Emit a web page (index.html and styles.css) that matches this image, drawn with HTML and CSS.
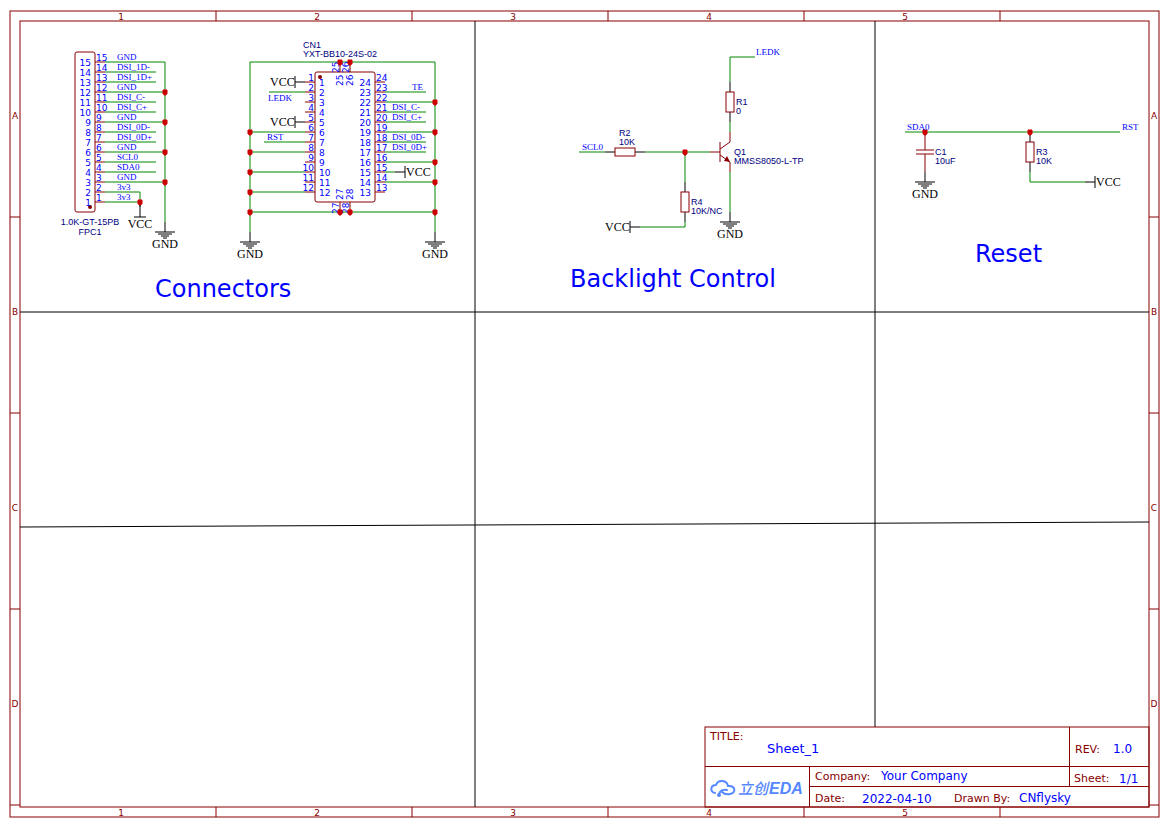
FILE: index.html
```html
<!DOCTYPE html>
<html lang="en">
<head>
<meta charset="utf-8">
<title>Sheet_1</title>
<link rel="stylesheet" href="styles.css">
</head>
<body>
<main class="page">
<svg class="sheet" viewBox="0 0 1169 828" role="img" aria-label="Schematic Sheet_1">
  <defs>
    <g id="gnd">
      <path class="lead" d="M0-10V0M-10 0H10M-7 2H7M-4 4H4M-2 6H2"/>
      <text class="power mid" x="0" y="16">GND</text>
    </g>
    <g id="res-v">
      <path class="lead" d="M0-20V-10M0 10V20"/>
      <rect class="part" x="-4" y="-10" width="8" height="20"/>
    </g>
    <g id="res-h">
      <path class="lead" d="M-20 0H-10M10 0H20"/>
      <rect class="part" x="-10" y="-4" width="20" height="8"/>
    </g>
    <path id="dot" class="junction" d="M-1-2H1V-2H2V2H1V3H-1V2H-2V-2H-1Z"/>
  </defs>

  <!-- Sheet frame -->
  <g class="frame">
    <rect x="10" y="11" width="1149" height="806"/>
    <rect x="20" y="21" width="1129" height="786"/>
    <path d="M216 11V21M412 11V21M608 11V21M804 11V21M1000 11V21"/>
    <path d="M216 807V817M412 807V817M608 807V817M804 807V817M1000 807V817"/>
    <path d="M10 217H20M10 413H20M10 609H20M10 805H20"/>
    <path d="M1149 217H1159M1149 413H1159M1149 609H1159M1149 805H1159"/>
  </g>
  <g class="zone mid">
    <text y="20"><tspan x="121">1</tspan><tspan x="317">2</tspan><tspan x="513">3</tspan><tspan x="709">4</tspan><tspan x="905">5</tspan></text>
    <text y="816"><tspan x="121">1</tspan><tspan x="317">2</tspan><tspan x="513">3</tspan><tspan x="709">4</tspan><tspan x="905">5</tspan></text>
    <text><tspan x="15" y="119">A</tspan><tspan x="15" y="315">B</tspan><tspan x="15" y="511">C</tspan><tspan x="15" y="707">D</tspan></text>
    <text><tspan x="1154" y="119">A</tspan><tspan x="1154" y="315">B</tspan><tspan x="1154" y="511">C</tspan><tspan x="1154" y="707">D</tspan></text>
  </g>

  <!-- Section dividers -->
  <path class="divider" d="M20 312H1149M475 21V807M875 21V727M20 527L1149 522"/>

  <!-- FPC1 -->
  <path class="wire" d="M105 62H165V222M105 72H156M105 82H156M105 92H165M105 102H156M105 112H156M105 122H165M105 132H156M105 142H156M105 152H165M105 162H156M105 172H156M105 182H165M105 192H140V207M105 202H140"/>
  <rect class="part" x="75" y="52" width="20" height="160" rx="2"/>
  <path class="part" d="M95 62h10M95 72h10M95 82h10M95 92h10M95 102h10M95 112h10M95 122h10M95 132h10M95 142h10M95 152h10M95 162h10M95 172h10M95 182h10M95 192h10M95 202h10"/>
  <circle class="mark" cx="90" cy="207" r="2"/>
  <text class="pin" y="51"><tspan x="96" dy="10">15</tspan><tspan x="96" dy="10">14</tspan><tspan x="96" dy="10">13</tspan><tspan x="96" dy="10">12</tspan><tspan x="96" dy="10">11</tspan><tspan x="96" dy="10">10</tspan><tspan x="96" dy="10">9</tspan><tspan x="96" dy="10">8</tspan><tspan x="96" dy="10">7</tspan><tspan x="96" dy="10">6</tspan><tspan x="96" dy="10">5</tspan><tspan x="96" dy="10">4</tspan><tspan x="96" dy="10">3</tspan><tspan x="96" dy="10">2</tspan><tspan x="96" dy="10">1</tspan></text>
  <text class="pin end" y="56"><tspan x="91" dy="10">15</tspan><tspan x="91" dy="10">14</tspan><tspan x="91" dy="10">13</tspan><tspan x="91" dy="10">12</tspan><tspan x="91" dy="10">11</tspan><tspan x="91" dy="10">10</tspan><tspan x="91" dy="10">9</tspan><tspan x="91" dy="10">8</tspan><tspan x="91" dy="10">7</tspan><tspan x="91" dy="10">6</tspan><tspan x="91" dy="10">5</tspan><tspan x="91" dy="10">4</tspan><tspan x="91" dy="10">3</tspan><tspan x="91" dy="10">2</tspan><tspan x="91" dy="10">1</tspan></text>
  <text class="net" y="50"><tspan x="117" dy="10">GND</tspan><tspan x="117" dy="10">DSI_1D-</tspan><tspan x="117" dy="10">DSI_1D+</tspan><tspan x="117" dy="10">GND</tspan><tspan x="117" dy="10">DSI_C-</tspan><tspan x="117" dy="10">DSI_C+</tspan><tspan x="117" dy="10">GND</tspan><tspan x="117" dy="10">DSI_0D-</tspan><tspan x="117" dy="10">DSI_0D+</tspan><tspan x="117" dy="10">GND</tspan><tspan x="117" dy="10">SCL0</tspan><tspan x="117" dy="10">SDA0</tspan><tspan x="117" dy="10">GND</tspan><tspan x="117" dy="10">3v3</tspan><tspan x="117" dy="10">3v3</tspan></text>
  <use href="#dot" x="165" y="92"/><use href="#dot" x="165" y="122"/><use href="#dot" x="165" y="152"/><use href="#dot" x="165" y="182"/><use href="#dot" x="140" y="202"/>
  <path class="lead" d="M140 205V217M134 217H146"/>
  <text class="power mid" x="140" y="228">VCC</text>
  <use href="#gnd" x="165" y="232"/>
  <text class="name mid" x="90" y="225">1.0K-GT-15PB</text>
  <text class="name mid" x="90" y="235">FPC1</text>

  <!-- CN1 -->
  <path class="wire" d="M250 232V62H435V232M250 212H435M269 92H305M250 132H305M264 142H305M250 152H305M250 172H305M250 192H305M385 92H426M385 102H435M385 112H426M385 122H426M385 132H435M385 142H426M385 152H426M385 162H435M385 172H395M385 182H435"/>
  <rect class="part" x="315" y="72" width="60" height="130" rx="2"/>
  <path class="part" d="M305 82h10M305 92h10M305 102h10M305 112h10M305 122h10M305 132h10M305 142h10M305 152h10M305 162h10M305 172h10M305 182h10M305 192h10"/>
  <path class="part" d="M375 82h10M375 92h10M375 102h10M375 112h10M375 122h10M375 132h10M375 142h10M375 152h10M375 162h10M375 172h10M375 182h10M375 192h10"/>
  <path class="part" d="M340 62v10M350 62v10M340 202v10M350 202v10"/>
  <circle class="mark" cx="320" cy="77" r="2"/>
  <text class="pin end" y="71"><tspan x="314" dy="10">1</tspan><tspan x="314" dy="10">2</tspan><tspan x="314" dy="10">3</tspan><tspan x="314" dy="10">4</tspan><tspan x="314" dy="10">5</tspan><tspan x="314" dy="10">6</tspan><tspan x="314" dy="10">7</tspan><tspan x="314" dy="10">8</tspan><tspan x="314" dy="10">9</tspan><tspan x="314" dy="10">10</tspan><tspan x="314" dy="10">11</tspan><tspan x="314" dy="10">12</tspan></text>
  <text class="pin" y="76"><tspan x="319" dy="10">1</tspan><tspan x="319" dy="10">2</tspan><tspan x="319" dy="10">3</tspan><tspan x="319" dy="10">4</tspan><tspan x="319" dy="10">5</tspan><tspan x="319" dy="10">6</tspan><tspan x="319" dy="10">7</tspan><tspan x="319" dy="10">8</tspan><tspan x="319" dy="10">9</tspan><tspan x="319" dy="10">10</tspan><tspan x="319" dy="10">11</tspan><tspan x="319" dy="10">12</tspan></text>
  <text class="pin" y="71"><tspan x="376" dy="10">24</tspan><tspan x="376" dy="10">23</tspan><tspan x="376" dy="10">22</tspan><tspan x="376" dy="10">21</tspan><tspan x="376" dy="10">20</tspan><tspan x="376" dy="10">19</tspan><tspan x="376" dy="10">18</tspan><tspan x="376" dy="10">17</tspan><tspan x="376" dy="10">16</tspan><tspan x="376" dy="10">15</tspan><tspan x="376" dy="10">14</tspan><tspan x="376" dy="10">13</tspan></text>
  <text class="pin end" y="76"><tspan x="371" dy="10">24</tspan><tspan x="371" dy="10">23</tspan><tspan x="371" dy="10">22</tspan><tspan x="371" dy="10">21</tspan><tspan x="371" dy="10">20</tspan><tspan x="371" dy="10">19</tspan><tspan x="371" dy="10">18</tspan><tspan x="371" dy="10">17</tspan><tspan x="371" dy="10">16</tspan><tspan x="371" dy="10">15</tspan><tspan x="371" dy="10">14</tspan><tspan x="371" dy="10">13</tspan></text>
  <g class="pin">
    <text transform="translate(339 73) rotate(-90)">25</text>
    <text transform="translate(349 73) rotate(-90)">26</text>
    <text transform="translate(343 86) rotate(-90)">25</text>
    <text transform="translate(353 86) rotate(-90)">26</text>
    <text transform="translate(343 200) rotate(-90)">27</text>
    <text transform="translate(353 200) rotate(-90)">28</text>
    <text transform="translate(339 214) rotate(-90)">27</text>
    <text transform="translate(349 214) rotate(-90)">28</text>
  </g>
  <g class="net">
    <text x="268" y="101">LEDK</text>
    <text x="267" y="140">RST</text>
    <text x="412" y="90">TE</text>
    <text x="392" y="110">DSI_C-</text>
    <text x="392" y="120">DSI_C+</text>
    <text x="392" y="140">DSI_0D-</text>
    <text x="392" y="150">DSI_0D+</text>
  </g>
  <use href="#dot" x="250" y="132"/><use href="#dot" x="250" y="152"/><use href="#dot" x="250" y="172"/><use href="#dot" x="250" y="192"/><use href="#dot" x="250" y="212"/>
  <use href="#dot" x="340" y="62"/><use href="#dot" x="350" y="62"/><use href="#dot" x="340" y="212"/><use href="#dot" x="350" y="212"/>
  <use href="#dot" x="435" y="102"/><use href="#dot" x="435" y="132"/><use href="#dot" x="435" y="162"/><use href="#dot" x="435" y="182"/><use href="#dot" x="435" y="212"/>
  <path class="lead" d="M295 82H305M295 76V88M295 122H305M295 116V128M395 172H405M405 166V178"/>
  <text class="power" x="270" y="86">VCC</text>
  <text class="power" x="270" y="126">VCC</text>
  <text class="power" x="406" y="176">VCC</text>
  <use href="#gnd" x="250" y="242"/>
  <use href="#gnd" x="435" y="242"/>
  <text class="name" x="303" y="48">CN1</text>
  <text class="name" x="303" y="57">YXT-BB10-24S-02</text>
  <text class="heading" x="155" y="297">Connectors</text>

  <!-- Backlight control -->
  <path class="wire" d="M755 57H730V82M730 122V132M730 172V212M579 152H605M645 152H710M685 152V182M685 222V227H640"/>
  <use href="#res-v" x="730" y="102"/>
  <use href="#res-h" x="625" y="152"/>
  <use href="#res-v" x="685" y="202"/>
  <path class="part" d="M710 152H720M720 142V162M720 149L730 142V132M720 155L730 162V172"/>
  <path class="arrow" d="M730 162L724 161L727 156Z"/>
  <use href="#dot" x="685" y="152"/>
  <use href="#gnd" x="730" y="222"/>
  <path class="lead" d="M630 227H640M630 221V233"/>
  <text class="power" x="605" y="231">VCC</text>
  <text class="net" x="756" y="55">LEDK</text>
  <text class="net" x="582" y="150">SCL0</text>
  <g class="name">
    <text x="736" y="105">R1</text>
    <text x="736" y="114">0</text>
    <text x="619" y="136">R2</text>
    <text x="619" y="145">10K</text>
    <text x="734" y="155">Q1</text>
    <text x="734" y="164">MMSS8050-L-TP</text>
    <text x="691" y="205">R4</text>
    <text x="691" y="214">10K/NC</text>
  </g>
  <text class="heading" x="570" y="287">Backlight Control</text>

  <!-- Reset -->
  <path class="wire" d="M905 132H1120M1030 172V182H1085"/>
  <path class="part" d="M925 132V150M916 150H934M916 154H934M925 154V172"/>
  <use href="#gnd" x="925" y="182"/>
  <use href="#res-v" x="1030" y="152"/>
  <use href="#dot" x="925" y="132"/><use href="#dot" x="1030" y="132"/>
  <path class="lead" d="M1085 182H1095M1095 176V188"/>
  <text class="power" x="1096" y="186">VCC</text>
  <text class="net" x="907" y="130">SDA0</text>
  <text class="net" x="1122" y="130">RST</text>
  <g class="name">
    <text x="935" y="155">C1</text>
    <text x="935" y="164">10uF</text>
    <text x="1036" y="155">R3</text>
    <text x="1036" y="164">10K</text>
  </g>
  <text class="heading" x="975" y="262">Reset</text>

  <!-- Title block -->
  <g class="frame">
    <rect x="705" y="727" width="444" height="80"/>
    <path class="crisp" d="M705 766H1149M809 786H1149M809 766V807M1069 727V786"/>
  </g>
  <g class="label">
    <text x="710" y="740">TITLE:</text>
    <text x="1075" y="753">REV:</text>
    <text x="815" y="780">Company:</text>
    <text x="1074" y="782">Sheet:</text>
    <text x="815" y="802">Date:</text>
    <text x="954" y="802">Drawn By:</text>
  </g>
  <g class="value">
    <text class="large" x="767" y="753">Sheet_1</text>
    <text x="1113" y="753">1.0</text>
    <text x="881" y="780">Your Company</text>
    <text x="1119" y="783">1/1</text>
    <text x="862" y="803">2022-04-10</text>
    <text x="1019" y="802">CNflysky</text>
  </g>
  <g class="cloud">
    <path d="M715 793C710 792 710 785 716 785C718 779 727 780 728 786C735 785 737 793 730 794C726 795 724 794 722 792"/>
    <path d="M719 794C720 791 723 789 727 790"/>
    <circle cx="719" cy="795" r="1"/>
  </g>
  <text class="brand cjk" x="738" y="794">立创</text>
  <text class="brand" x="769" y="794">EDA</text>
</svg>
</main>
</body>
</html>
```
FILE: styles.css
```css
body {
  margin: 0;
  background: #fff;
}

.page {
  width: 100%;
}

.sheet {
  display: block;
  width: 100%;
  height: auto;
  font-family: "DejaVu Sans", Verdana, sans-serif;
}

.frame,
.part,
.wire,
.lead,
.divider {
  fill: none;
  stroke-width: 1px;
}

.frame,
.part {
  stroke: #880000;
}

.wire {
  stroke: #008800;
}

.lead,
.divider {
  stroke: #000;
}

.crisp {
  shape-rendering: crispEdges;
}

.junction {
  fill: #cc0000;
  stroke: #cc0000;
  stroke-width: 1px;
}

.mark,
.arrow {
  fill: #880000;
}

.mid {
  text-anchor: middle;
}

.end {
  text-anchor: end;
}

.zone {
  font-size: 9px;
  fill: #880000;
}

.pin {
  font-size: 9px;
  fill: #0000ff;
}

.net {
  font-family: "Liberation Serif", "Times New Roman", serif;
  font-size: 9px;
  fill: #0000ff;
}

.power {
  font-family: "Liberation Serif", "Times New Roman", serif;
  font-size: 12px;
  fill: #000;
}

.name {
  font-family: "Liberation Sans", Arial, sans-serif;
  font-size: 9px;
  fill: #000080;
}

.heading {
  font-size: 24px;
  fill: #0000ff;
}

.label {
  font-size: 11px;
  fill: #880000;
}

.value {
  font-size: 12px;
  fill: #0000ff;
}

.large {
  font-size: 13px;
}

.cloud {
  fill: none;
  stroke: #5588ff;
  stroke-width: 2px;
  stroke-linecap: round;
  stroke-linejoin: round;
}

.brand {
  font-family: "Liberation Sans", Arial, sans-serif;
  font-size: 16px;
  font-weight: bold;
  font-style: italic;
  fill: #5588ff;
}

.cjk {
  font-family: "Noto Sans CJK SC", sans-serif;
  font-size: 15px;
  font-weight: 500;
}
```
